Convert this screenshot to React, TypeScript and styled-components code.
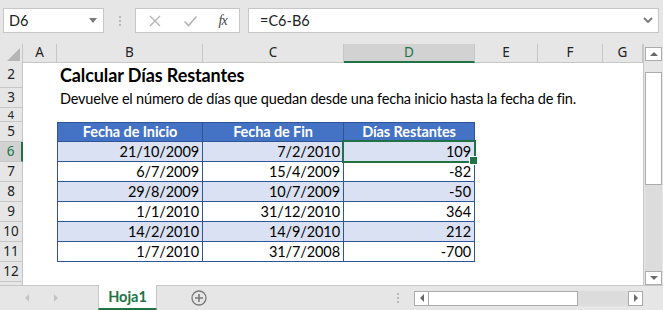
import { createGlobalStyle, styled } from "styled-components";

const GlobalStyle = createGlobalStyle`
  html, body {
    margin: 0;
    padding: 0;
    background: #e6e6e6;
  }
  * {
    box-sizing: border-box;
  }
`;

const GREEN = "#217346";
const TABLE_BORDER = "#2f5597";
const CELL_FONT = `Lato, "Liberation Sans", sans-serif`;
const UI_FONT = `"Noto Sans", "Open Sans", sans-serif`;

const Page = styled.div`
  width: 663px;
  height: 310px;
  overflow: hidden;
  display: flex;
  flex-direction: column;
  background: #e6e6e6;
  font-family: ${UI_FONT};
`;

/* ---------- formula bar ---------- */

const TopBar = styled.div`
  height: 44px;
  display: flex;
  align-items: flex-start;
  padding: 8px 4px 0 3px;
`;

const NameBox = styled.div`
  width: 101px;
  height: 25px;
  background: #fff;
  border: 1px solid #c6c6c6;
  display: flex;
  align-items: center;
  justify-content: space-between;
  padding: 0 6px 0 5px;
  font-family: ${CELL_FONT};
  font-size: 14.5px;
  color: #222;
`;

const Caret = styled.span`
  width: 0;
  height: 0;
  border-left: 4px solid transparent;
  border-right: 4px solid transparent;
  border-top: 5px solid #7a7a7a;
`;

const Grip = styled.div`
  width: 31px;
  height: 25px;
  display: flex;
  flex-direction: column;
  align-items: center;
  justify-content: center;
  gap: 2px;
  span {
    width: 2px;
    height: 2px;
    background: #b9b9b9;
  }
`;

const FxGroup = styled.div`
  width: 105px;
  height: 25px;
  background: #fff;
  border: 1px solid #c6c6c6;
  display: flex;
  align-items: center;
  justify-content: space-around;
  padding: 0 2px;
`;

const FxLabel = styled.span`
  font-family: "Liberation Serif", serif;
  font-style: italic;
  font-size: 14px;
  color: #444;
  letter-spacing: -1px;
`;

const FormulaBox = styled.div`
  flex: 1;
  margin-left: 8px;
  height: 25px;
  background: #fff;
  border: 1px solid #c6c6c6;
  display: flex;
  align-items: center;
  justify-content: space-between;
  padding: 0 5px 0 11px;
  font-family: ${CELL_FONT};
  font-size: 14.5px;
  color: #222;
`;

/* ---------- sheet ---------- */

const SheetArea = styled.div`
  height: 241px;
  display: flex;
  align-items: flex-start;
`;

const Grid = styled.div`
  width: 644px;
  height: 241px;
  background: #fff;
  border-right: 1px solid #c6c6c6;
  overflow: hidden;
  display: flex;
  flex-direction: column;
`;

const HeaderRow = styled.div`
  height: 19px;
  flex: none;
  display: flex;
  background: #e6e6e6;
`;

const Corner = styled.div`
  width: 23px;
  flex: none;
  border-right: 1px solid #c6c6c6;
  display: flex;
  align-items: flex-end;
  justify-content: flex-end;
  padding: 0 2px 2px 0;
`;

const ColHead = styled.div<{ $w: number; $active?: boolean }>`
  width: ${(p) => p.$w}px;
  flex: none;
  display: flex;
  align-items: center;
  justify-content: center;
  border-right: 1px solid #c6c6c6;
  border-bottom: ${(p) => (p.$active ? `2px solid ${GREEN}` : "1px solid #c6c6c6")};
  background: ${(p) => (p.$active ? "#d2d2d2" : "#e6e6e6")};
  color: ${(p) => (p.$active ? GREEN : "#222")};
  font-size: 13.5px;
  line-height: 1;
  padding-top: ${(p) => (p.$active ? "1px" : "0")};
`;

const SheetRow = styled.div<{ $h: number }>`
  height: ${(p) => p.$h}px;
  flex: none;
  display: flex;
`;

const RowHead = styled.div<{ $active?: boolean; $small?: boolean }>`
  width: 23px;
  flex: none;
  display: flex;
  align-items: center;
  justify-content: center;
  background: ${(p) => (p.$active ? "#d2d2d2" : "#e6e6e6")};
  border-right: ${(p) => (p.$active ? `2px solid ${GREEN}` : "1px solid #c6c6c6")};
  border-bottom: 1px solid #c6c6c6;
  color: ${(p) => (p.$active ? GREEN : "#222")};
  font-size: ${(p) => (p.$small ? "11px" : "13.5px")};
  line-height: ${(p) => (p.$small ? "11px" : "1")};
`;

const Blank = styled.div<{ $w: number }>`
  width: ${(p) => p.$w}px;
  flex: none;
`;

const TextCell = styled.div<{ $bold?: boolean }>`
  flex: 1;
  display: flex;
  align-items: flex-end;
  padding: 0 0 ${(p) => (p.$bold ? "2px" : "1px")} 3px;
  white-space: nowrap;
  font-family: ${CELL_FONT};
  font-size: ${(p) => (p.$bold ? "18px" : "14.5px")};
  letter-spacing: ${(p) => (p.$bold ? "-0.1px" : "-0.2px")};
  font-weight: ${(p) => (p.$bold ? 700 : 400)};
  color: #000;
`;

const TableCell = styled.div<{
  $w: number;
  $kind: "head" | "blue" | "white";
  $first?: boolean;
  $top?: boolean;
  $selected?: boolean;
}>`
  position: relative;
  z-index: ${(p) => (p.$selected ? 2 : "auto")};
  width: ${(p) => p.$w}px;
  flex: none;
  display: flex;
  align-items: flex-end;
  justify-content: ${(p) => (p.$kind === "head" ? "center" : "flex-end")};
  padding: 0 3px 1px 3px;
  border-right: 1px solid ${TABLE_BORDER};
  border-bottom: 1px solid ${TABLE_BORDER};
  border-left: ${(p) => (p.$first ? `1px solid ${TABLE_BORDER}` : "none")};
  border-top: ${(p) => (p.$top ? `1px solid ${TABLE_BORDER}` : "none")};
  background: ${(p) =>
    p.$kind === "head" ? "#4472c4" : p.$kind === "blue" ? "#d9e1f2" : "#fff"};
  color: ${(p) => (p.$kind === "head" ? "#fff" : "#000")};
  font-family: ${CELL_FONT};
  font-size: 14.5px;
  letter-spacing: -0.1px;
  font-weight: ${(p) => (p.$kind === "head" ? 700 : 400)};
  white-space: nowrap;

  ${(p) =>
    p.$selected &&
    `
    &::before {
      content: "";
      position: absolute;
      left: -2px;
      top: -2px;
      right: -2px;
      bottom: -2px;
      border: 2px solid ${GREEN};
    }
    &::after {
      content: "";
      position: absolute;
      right: -4px;
      bottom: -4px;
      width: 7px;
      height: 7px;
      background: ${GREEN};
      border: 1px solid #fff;
    }
  `}
`;

/* ---------- scrollbars ---------- */

const VScroll = styled.div`
  width: 17px;
  height: 241px;
  margin-left: 1px;
  display: flex;
  flex-direction: column;
  padding-top: 3px;
`;

const ScrollBtn = styled.div<{ $h?: number; $w?: number }>`
  width: ${(p) => (p.$w ? `${p.$w}px` : "100%")};
  height: ${(p) => (p.$h ? `${p.$h}px` : "100%")};
  flex: none;
  background: #fff;
  border: 1px solid #ababab;
  display: flex;
  align-items: center;
  justify-content: center;
`;

const Track = styled.div`
  flex: 1;
  background: #dcdcdc;
`;

const TopGap = styled.div`
  height: 11px;
  flex: none;
  background: #e6e6e6;
`;

const VThumb = styled.div`
  height: 113px;
  flex: none;
  background: #fff;
  border: 1px solid #ababab;
`;

const Tri = styled.span<{ $dir: "up" | "down" | "left" | "right"; $c?: string }>`
  width: 0;
  height: 0;
  ${(p) => {
    const c = p.$c ?? "#6a6a6a";
    switch (p.$dir) {
      case "up":
        return `border-left:4px solid transparent;border-right:4px solid transparent;border-bottom:4px solid ${c};`;
      case "down":
        return `border-left:4px solid transparent;border-right:4px solid transparent;border-top:4px solid ${c};`;
      case "left":
        return `border-top:4px solid transparent;border-bottom:4px solid transparent;border-right:4px solid ${c};`;
      default:
        return `border-top:4px solid transparent;border-bottom:4px solid transparent;border-left:4px solid ${c};`;
    }
  }}
`;

/* ---------- sheet tabs ---------- */

const TabBar = styled.div`
  height: 25px;
  display: flex;
  align-items: stretch;
  border-top: 1px solid #c6c6c6;
`;

const NavArrows = styled.div`
  width: 98px;
  display: flex;
  align-items: center;
  padding-left: 25px;
  gap: 25px;
`;

const SheetTab = styled.div`
  width: 59px;
  margin-top: -1px;
  background: #fff;
  border-left: 1px solid #c6c6c6;
  border-right: 1px solid #c6c6c6;
  border-bottom: 2px solid ${GREEN};
  display: flex;
  align-items: center;
  justify-content: center;
  font-family: ${CELL_FONT};
  font-weight: 700;
  font-size: 14.5px;
  color: ${GREEN};
`;

const AddSheet = styled.div`
  width: 84px;
  display: flex;
  align-items: center;
  justify-content: center;
`;

const HGrip = styled(Grip)`
  width: 16px;
  height: auto;
  margin-left: 149px;
`;

const HScroll = styled.div`
  width: 229px;
  height: 15px;
  align-self: center;
  margin-left: 8px;
  display: flex;
`;

const HThumb = styled.div`
  width: 149px;
  flex: none;
  background: #fff;
  border: 1px solid #ababab;
  border-left: none;
`;

const cols = [
  { id: "A", w: 34 },
  { id: "B", w: 146 },
  { id: "C", w: 141 },
  { id: "D", w: 131 },
  { id: "E", w: 63 },
  { id: "F", w: 65 },
  { id: "G", w: 40 },
];

const data = [
  ["21/10/2009", "7/2/2010", "109"],
  ["6/7/2009", "15/4/2009", "-82"],
  ["29/8/2009", "10/7/2009", "-50"],
  ["1/1/2010", "31/12/2010", "364"],
  ["14/2/2010", "14/9/2010", "212"],
  ["1/7/2010", "31/7/2008", "-700"],
];

const tableWidths = [146, 141, 131];

export default function App() {
  return (
    <>
      <GlobalStyle />
      <Page>
        <TopBar>
          <NameBox>
            D6
            <Caret />
          </NameBox>
          <Grip>
            <span />
            <span />
            <span />
          </Grip>
          <FxGroup>
            <svg width="14" height="14" viewBox="0 0 14 14">
              <path d="M2 2 L12 12 M12 2 L2 12" stroke="#b3b3b3" strokeWidth="1.3" />
            </svg>
            <svg width="15" height="14" viewBox="0 0 15 14">
              <path d="M1.5 7.5 L5.5 11.5 L13.5 2.5" stroke="#b3b3b3" strokeWidth="1.6" fill="none" />
            </svg>
            <FxLabel>fx</FxLabel>
          </FxGroup>
          <FormulaBox>
            =C6-B6
            <svg width="10" height="7" viewBox="0 0 10 7">
              <path d="M1 1 L5 5 L9 1" stroke="#777" strokeWidth="1.8" fill="none" />
            </svg>
          </FormulaBox>
        </TopBar>

        <SheetArea>
          <Grid>
            <HeaderRow>
              <Corner>
                <svg width="13" height="13" viewBox="0 0 13 13">
                  <path d="M13 0 L13 13 L0 13 Z" fill="#b5b5b5" />
                </svg>
              </Corner>
              {cols.map((c) => (
                <ColHead key={c.id} $w={c.w} $active={c.id === "D"}>
                  {c.id}
                </ColHead>
              ))}
            </HeaderRow>

            <SheetRow $h={25}>
              <RowHead>2</RowHead>
              <Blank $w={34} />
              <TextCell $bold>Calcular Días Restantes</TextCell>
            </SheetRow>
            <SheetRow $h={20}>
              <RowHead>3</RowHead>
              <Blank $w={34} />
              <TextCell>
                Devuelve el número de días que quedan desde una fecha inicio hasta la fecha de fin.
              </TextCell>
            </SheetRow>
            <SheetRow $h={14}>
              <RowHead $small>4</RowHead>
            </SheetRow>
            <SheetRow $h={20}>
              <RowHead>5</RowHead>
              <Blank $w={34} />
              {["Fecha de Inicio", "Fecha de Fin", "Días Restantes"].map((h, i) => (
                <TableCell key={h} $w={tableWidths[i]} $kind="head" $first={i === 0} $top>
                  {h}
                </TableCell>
              ))}
            </SheetRow>
            {data.map((row, r) => (
              <SheetRow key={r} $h={20}>
                <RowHead $active={r === 0}>{r + 6}</RowHead>
                <Blank $w={34} />
                {row.map((v, i) => (
                  <TableCell
                    key={i}
                    $w={tableWidths[i]}
                    $kind={r % 2 === 0 ? "blue" : "white"}
                    $first={i === 0}
                    $selected={r === 0 && i === 2}
                  >
                    {v}
                  </TableCell>
                ))}
              </SheetRow>
            ))}
            <SheetRow $h={20}>
              <RowHead>12</RowHead>
            </SheetRow>
            <SheetRow $h={20}>
              <RowHead />
            </SheetRow>
          </Grid>

          <VScroll>
            <ScrollBtn $h={14}>
              <Tri $dir="up" />
            </ScrollBtn>
            <TopGap />
            <VThumb />
            <Track />
            <ScrollBtn $h={14}>
              <Tri $dir="down" />
            </ScrollBtn>
          </VScroll>
        </SheetArea>

        <TabBar>
          <NavArrows>
            <Tri $dir="left" $c="#c4c4c4" />
            <Tri $dir="right" $c="#c4c4c4" />
          </NavArrows>
          <SheetTab>Hoja1</SheetTab>
          <AddSheet>
            <svg width="16" height="16" viewBox="0 0 16 16">
              <circle cx="8" cy="8" r="7" stroke="#7a7a7a" strokeWidth="1.3" fill="none" />
              <path d="M8 4 V12 M4 8 H12" stroke="#7a7a7a" strokeWidth="1.6" />
            </svg>
          </AddSheet>
          <HGrip>
            <span />
            <span />
            <span />
          </HGrip>
          <HScroll>
            <ScrollBtn $w={15}>
              <Tri $dir="left" />
            </ScrollBtn>
            <HThumb />
            <Track />
            <ScrollBtn $w={15}>
              <Tri $dir="right" />
            </ScrollBtn>
          </HScroll>
        </TabBar>
      </Page>
    </>
  );
}
